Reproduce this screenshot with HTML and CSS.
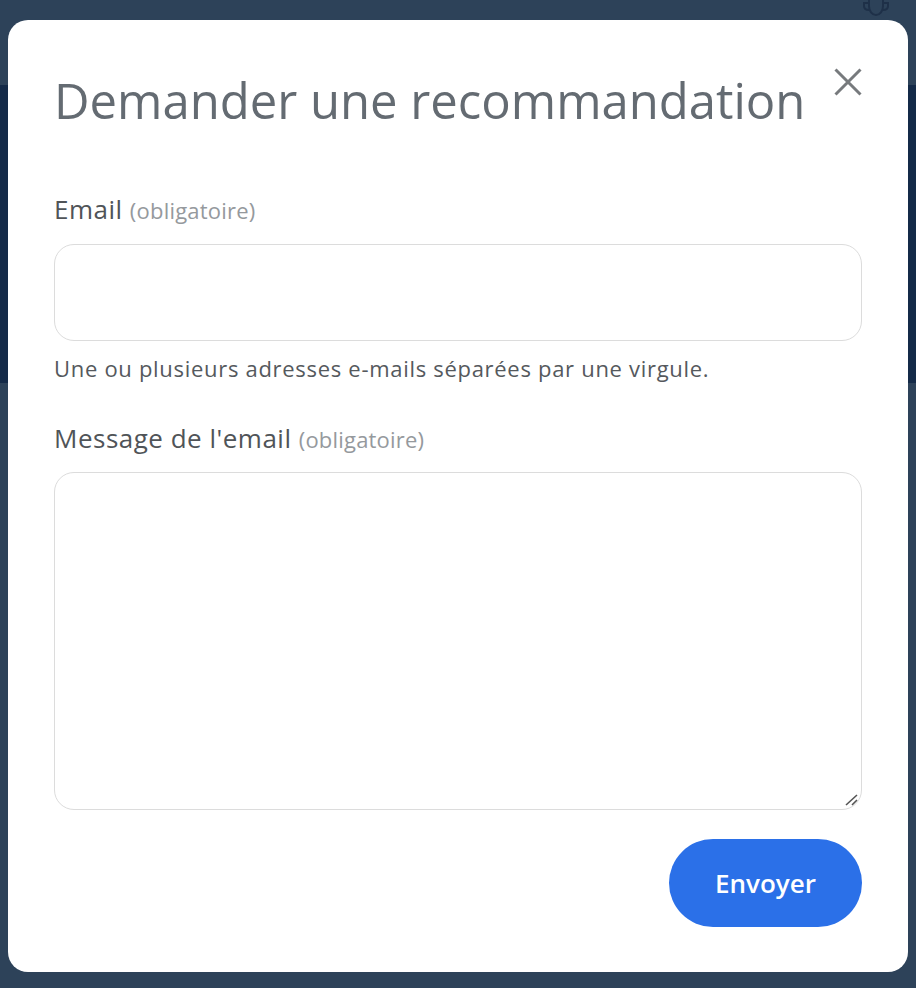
FILE: index.html
```html
<!DOCTYPE html>
<html lang="fr">
<head>
<meta charset="utf-8">
<title>Demander une recommandation</title>
<link rel="stylesheet" href="styles.css">
</head>
<body>
<svg class="trophy" width="30" height="20" viewBox="0 0 30 20" aria-hidden="true">
  <path d="M8 0 V6 C8 11 11 15 15 15 C19 15 22 11 22 6 V0 M8 3 H3 V6 C3 9 5 10 8 10 M22 3 H27 V6 C27 9 25 10 22 10" fill="none" stroke="#1e3048" stroke-width="2"/>
</svg>
<div class="modal">
  <div class="header">
    <h1 class="title">Demander une recommandation</h1>
    <button class="close" aria-label="Fermer">
      <svg width="28" height="28" viewBox="0 0 28 28"><path d="M1.5 1.5 L26.5 26.5 M26.5 1.5 L1.5 26.5" stroke="#777a7d" stroke-width="3" fill="none"/></svg>
    </button>
  </div>
  <label class="label">Email <span class="req">(obligatoire)</span></label>
  <div class="input"></div>
  <p class="hint">Une ou plusieurs adresses e-mails séparées par une virgule.</p>
  <label class="label label2">Message de l'email <span class="req">(obligatoire)</span></label>
  <div class="textarea">
    <svg class="grip" width="14" height="12" viewBox="0 0 14 12"><path d="M1 11 L12 1 M7 11 L12 6" stroke="#555" stroke-width="1.6" fill="none"/></svg>
  </div>
  <div class="actions">
    <button class="send">Envoyer</button>
  </div>
</div>
</body>
</html>
```
FILE: styles.css
```css
html, body {
  margin: 0;
  padding: 0;
}
body {
  width: 916px;
  height: 988px;
  overflow: hidden;
  background: linear-gradient(to bottom, #2d4259 0, #2d4259 85px, #142a48 85px, #142a48 383px, #2d4259 383px);
  font-family: "Open Sans", "Lato", sans-serif;
  padding-top: 20px;
  box-sizing: border-box;
}
.trophy {
  position: absolute;
  left: 861px;
  top: 0;
}
.modal {
  position: relative;
  margin: 0 8px;
  height: 952px;
  background: #fff;
  border-radius: 20px;
  padding: 0 46px;
  box-sizing: border-box;
  display: flex;
  flex-direction: column;
}
.header {
  display: flex;
  justify-content: space-between;
  align-items: flex-start;
  padding-top: 50px;
}
.title {
  margin: 0;
  font-weight: 400;
  font-size: 49px;
  line-height: 60px;
  color: #646b72;
}
.close {
  border: 0;
  background: none;
  padding: 0;
  margin-top: -2px;
  margin-right: 0;
  width: 28px;
  height: 28px;
  cursor: pointer;
}
.label {
  display: block;
  margin-top: 64px;
  font-size: 26px;
  line-height: 30px;
  letter-spacing: 0.5px;
  color: #505458;
}
.label2 {
  margin-top: 40px;
}
.req {
  font-size: 22px;
  letter-spacing: 0.2px;
  color: #95999d;
}
.input {
  margin-top: 19px;
  height: 97px;
  border: 1px solid #dcdcdc;
  border-radius: 20px;
  box-sizing: border-box;
}
.hint {
  margin: 12px 0 0;
  font-size: 22px;
  line-height: 30px;
  letter-spacing: 0.7px;
  color: #55595d;
}
.textarea {
  position: relative;
  margin-top: 18px;
  height: 338px;
  border: 1px solid #dcdcdc;
  border-radius: 20px;
  box-sizing: border-box;
}
.grip {
  position: absolute;
  right: 2px;
  bottom: 3px;
}
.actions {
  display: flex;
  justify-content: flex-end;
  margin-top: 29px;
}
.send {
  width: 193px;
  height: 88px;
  border: 0;
  border-radius: 44px;
  background: #2b70e8;
  color: #fff;
  font-family: "Open Sans", "Lato", sans-serif;
  font-size: 26px;
  font-weight: 600;
  cursor: pointer;
}
```
